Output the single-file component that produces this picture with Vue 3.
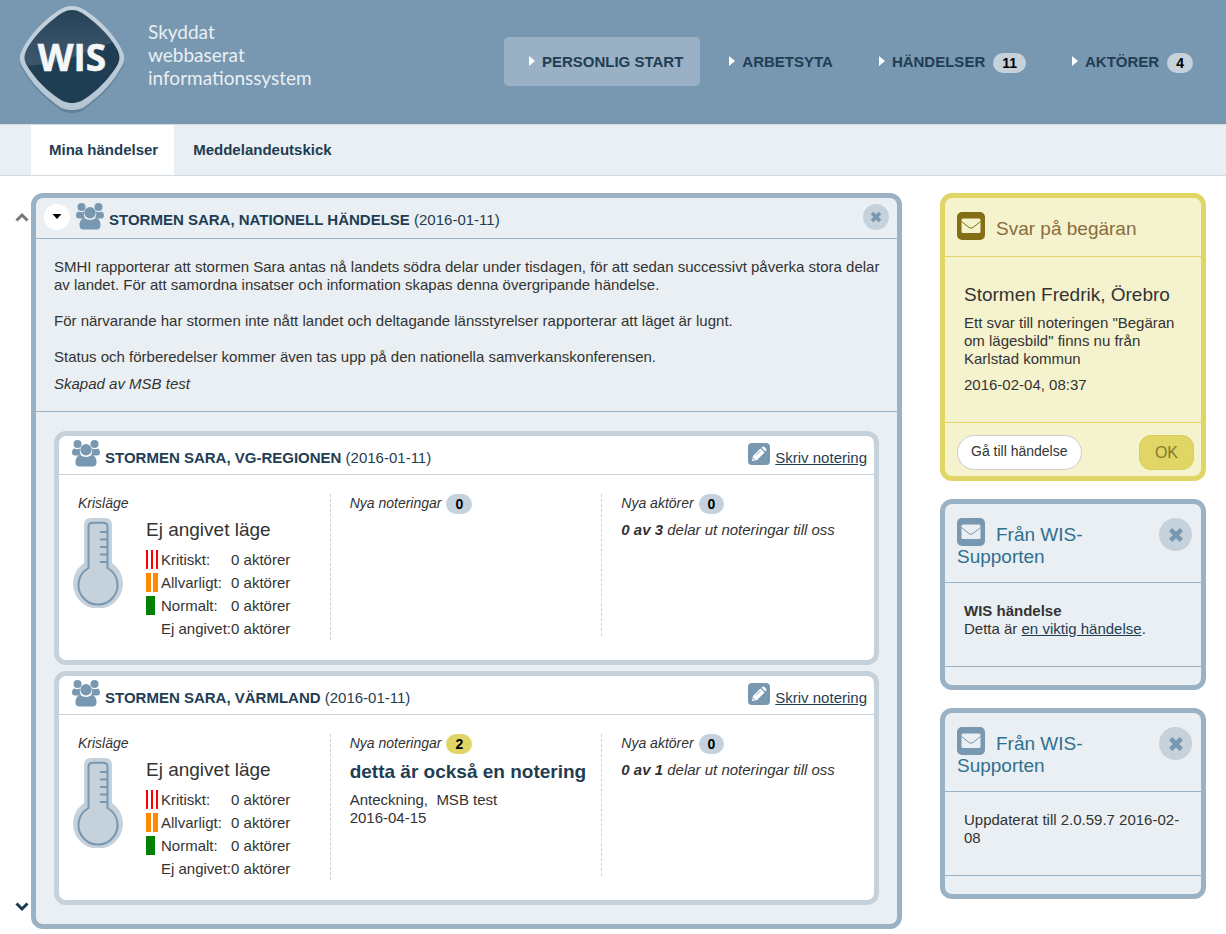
<script setup>
import { ref } from 'vue'

const navItems = [
  { label: 'PERSONLIG START', active: true },
  { label: 'ARBETSYTA' },
  { label: 'HÄNDELSER', count: 11 },
  { label: 'AKTÖRER', count: 4 }
]

const expanded = ref(true)

const events = [
  {
    title: 'STORMEN SARA, VG-REGIONEN',
    date: '(2016-01-11)',
    notes: 0,
    shared: '0 av 3'
  },
  {
    title: 'STORMEN SARA, VÄRMLAND',
    date: '(2016-01-11)',
    notes: 2,
    note: { title: 'detta är också en notering', meta: 'Anteckning,\u00a0 MSB test', date: '2016-04-15' },
    shared: '0 av 1'
  }
]

const levels = [
  { key: 'critical', label: 'Kritiskt:' },
  { key: 'serious', label: 'Allvarligt:' },
  { key: 'normal', label: 'Normalt:' },
  { key: 'unset', label: 'Ej angivet:' }
]
</script>

<template>
  <div class="page">
    <header class="top">
      <a class="brand" href="#">
        <svg class="logo" viewBox="0 0 112 112" role="img" aria-label="WIS">
          <defs>
            <linearGradient id="rim" x1="0" y1="0" x2="0" y2="1">
              <stop offset="0" stop-color="#c3d1dc" />
              <stop offset="1" stop-color="#b4c6d4" />
            </linearGradient>
            <linearGradient id="shine" x1="0" y1="0" x2="0" y2="1">
              <stop offset="0" stop-color="#fff" stop-opacity="0" />
              <stop offset="1" stop-color="#b9b4d0" stop-opacity="0.2" />
            </linearGradient>
            <clipPath id="inside">
              <path d="M56 8C62 8 67 11 73 16C86 26 96 37 102 49C104 54 104 57 102 62C95 74 85 85 73 94C66 99 62 101 56 101C50 101 46 99 39 94C27 85 17 74 10 62C8 57 8 54 10 49C16 37 26 26 39 16C45 11 50 8 56 8Z" />
            </clipPath>
          </defs>
          <path d="M56 6C64 6 69 10 76 15C90 26 100 37 106 49C109 55 109 60 106 66C99 79 89 91 76 101C68 108 64 111 56 111C48 111 44 108 36 101C23 91 13 79 6 66C3 60 3 55 6 49C12 37 22 26 36 15C43 10 48 6 56 6Z" fill="#3f607b" opacity="0.4" />
          <path d="M56 4C64 4 69 8 76 13C90 24 100 36 106 48C109 54 109 58 106 64C99 77 89 89 76 99C68 106 64 108 56 108C48 108 44 106 36 99C23 89 13 77 6 64C3 58 3 54 6 48C12 36 22 24 36 13C43 8 48 4 56 4Z" fill="url(#rim)" />
          <g clip-path="url(#inside)">
            <rect width="112" height="112" fill="#1f3d53" />
            <path d="M0 0H112V38C80 40 60 64 0 64Z" fill="url(#shine)" />
          </g>
          <text x="56" y="69" text-anchor="middle" font-family="'Open Sans', sans-serif" font-weight="700" font-size="37" fill="#f4f6f8" stroke="#f4f6f8" stroke-width="0.600">WIS</text>
        </svg>
        <span class="tagline">Skyddat<br />webbaserat<br />informationssystem</span>
      </a>
      <nav class="nav" aria-label="Huvudmeny">
        <a v-for="item in navItems" :key="item.label" href="#" :class="['nav-item', { active: item.active }]">
          <svg class="caret" viewBox="0 0 6 10" aria-hidden="true"><path d="M0 0L6 5L0 10Z" fill="#fff" /></svg>
          <span>{{ item.label }}</span>
          <span v-if="item.count" class="badge">{{ item.count }}</span>
        </a>
      </nav>
    </header>

    <nav class="tabs" aria-label="Undermeny">
      <a class="tab current" href="#">Mina händelser</a>
      <a class="tab" href="#">Meddelandeutskick</a>
    </nav>

    <div class="content">
      <div class="gutter">
        <button type="button" class="arrow" aria-label="Flytta upp">
          <svg viewBox="0 0 14 10"><path d="M1.500 8.500L7 3L12.500 8.500" fill="none" stroke="#777" stroke-width="3" /></svg>
        </button>
        <button type="button" class="arrow" aria-label="Flytta ned">
          <svg viewBox="0 0 14 10"><path d="M1.500 1.500L7 7L12.500 1.500" fill="none" stroke="#1c3b52" stroke-width="3" /></svg>
        </button>
      </div>

      <main class="panel">
        <div class="panel-head">
          <button type="button" class="toggle" aria-label="Visa eller dölj" @click="expanded = !expanded">
            <svg viewBox="0 0 10 6"><path d="M0.500 0H9.500L5 5Z" fill="#000" /></svg>
          </button>
          <svg class="people" viewBox="0 0 28 27" aria-hidden="true">
            <g fill="#7897b1">
              <circle cx="5.500" cy="4" r="4" /><circle cx="22.500" cy="4" r="4" />
              <path d="M2 8.500C4 9.500 6 9.500 8 8.500Q7 12.500 9 15.500H3Q0 15.500 0 12.500Q0 9.500 2 8.500ZM26 8.500C24 9.500 22 9.500 20 8.500Q21 12.500 19 15.500H25Q28 15.500 28 12.500Q28 9.500 26 8.500Z" />
              <circle cx="14" cy="9.700" r="5.700" />
              <path d="M8 15C12 17.500 16 17.500 20 15Q24.500 16 24.500 22.500Q24.500 26.500 20.500 26.500H7.500Q3.500 26.500 3.500 22.500Q3.500 16 8 15Z" />
            </g>
          </svg>
          <h1 class="title"><b>STORMEN SARA, NATIONELL HÄNDELSE</b> (2016-01-11)</h1>
          <button type="button" class="close" aria-label="Stäng">
            <svg viewBox="0 0 12 12"><path d="M2 2L10 10M10 2L2 10" stroke="#7897b1" stroke-width="3.600" /></svg>
          </button>
        </div>

        <div class="summary">
          <p>SMHI rapporterar att stormen Sara antas nå landets södra delar under tisdagen, för att sedan successivt påverka stora delar av landet. För att samordna insatser och information skapas denna övergripande händelse.</p>
          <p>För närvarande har stormen inte nått landet och deltagande länsstyrelser rapporterar att läget är lugnt.</p>
          <p>Status och förberedelser kommer även tas upp på den nationella samverkanskonferensen.</p>
          <p class="author">Skapad av MSB test</p>
        </div>

        <div v-show="expanded" class="events">
          <article v-for="event in events" :key="event.title" class="event">
            <div class="event-head">
              <svg class="people" viewBox="0 0 28 27" aria-hidden="true">
                <g fill="#7897b1">
                  <circle cx="5.500" cy="4" r="4" /><circle cx="22.500" cy="4" r="4" />
                  <path d="M2 8.500C4 9.500 6 9.500 8 8.500Q7 12.500 9 15.500H3Q0 15.500 0 12.500Q0 9.500 2 8.500ZM26 8.500C24 9.500 22 9.500 20 8.500Q21 12.500 19 15.500H25Q28 15.500 28 12.500Q28 9.500 26 8.500Z" />
                  <circle cx="14" cy="9.700" r="5.700" />
                  <path d="M8 15C12 17.500 16 17.500 20 15Q24.500 16 24.500 22.500Q24.500 26.500 20.500 26.500H7.500Q3.500 26.500 3.500 22.500Q3.500 16 8 15Z" />
                </g>
              </svg>
              <h2 class="title"><b>{{ event.title }}</b> {{ event.date }}</h2>
              <a class="write" href="#">
                <svg class="pencil" viewBox="0 0 22 22" aria-hidden="true">
                  <rect width="22" height="22" rx="4" fill="#7897b1" />
                  <path d="M4 18L5 13L12.500 5.500L16.500 9.500L9 17Z" fill="#fff" />
                  <path d="M13.500 4.500L14.500 3.700Q15.500 3.200 16.300 4L18 5.700Q18.800 6.500 18.200 7.500L17.500 8.500Z" fill="#fff" />
                  <path d="M8 12.500L12.500 8" stroke="#7897b1" stroke-width="0.800" />
                  <circle cx="6" cy="16" r="0.800" fill="#7897b1" />
                </svg>
                <span>Skriv notering</span>
              </a>
            </div>
            <div class="columns">
              <section class="col">
                <h3 class="label">Krisläge</h3>
                <div class="status">
                  <svg class="thermo" viewBox="0 0 50 90" aria-hidden="true">
                    <path d="M11 45V7Q11 0 18 0H32Q39 0 39 7V45A25 25 0 1 1 11 45Z" fill="#c5d1db" />
                    <path d="M15.500 50V9Q15.500 4.700 20 4.700H30Q34.500 4.700 34.500 9V50A19.500 19.500 0 1 1 15.500 50ZM27 14H34M27 21.500H34M27 29H34M27 36.500H34M27 44H34" fill="none" stroke="#7897b1" stroke-width="2" />
                  </svg>
                  <div>
                    <p class="level">Ej angivet läge</p>
                    <table class="levels">
                      <tbody>
                        <tr v-for="level in levels" :key="level.key">
                          <td class="mark"><i :class="['swatch', level.key]"></i></td>
                          <th scope="row">{{ level.label }}</th>
                          <td>0 aktörer</td>
                        </tr>
                      </tbody>
                    </table>
                  </div>
                </div>
              </section>
              <section class="col">
                <h3 class="label">Nya noteringar <span :class="['badge', { fresh: event.notes }]">{{ event.notes }}</span></h3>
                <template v-if="event.note">
                  <h4 class="note-title">{{ event.note.title }}</h4>
                  <p>{{ event.note.meta }}<br />{{ event.note.date }}</p>
                </template>
              </section>
              <section class="col">
                <h3 class="label">Nya aktörer <span class="badge">0</span></h3>
                <p class="shared"><b>{{ event.shared }}</b> delar ut noteringar till oss</p>
              </section>
            </div>
          </article>
        </div>
      </main>

      <aside class="side">
        <section class="card warn">
          <div class="card-head">
            <h2>
              <svg class="mail" viewBox="0 0 28 28" aria-hidden="true">
                <rect width="28" height="28" rx="5" fill="#836d15" />
                <rect x="4.500" y="6.500" width="19" height="14.500" rx="1.500" fill="#f5f2ce" />
                <path d="M4.500 9.500L12 15.500Q14 17 16 15.500L23.500 9.500" fill="none" stroke="#836d15" />
              </svg>Svar på begäran
            </h2>
          </div>
          <div class="card-body reply">
            <h3>Stormen Fredrik, Örebro</h3>
            <p>Ett svar till noteringen "Begäran om lägesbild" finns nu från Karlstad kommun</p>
            <p class="time">2016-02-04, 08:37</p>
          </div>
          <div class="card-foot">
            <button type="button" class="btn">Gå till händelse</button>
            <button type="button" class="btn ok">OK</button>
          </div>
        </section>

        <section v-for="n in 2" :key="n" class="card">
          <div class="card-head">
            <h2>
              <svg class="mail" viewBox="0 0 28 28" aria-hidden="true">
                <rect width="28" height="28" rx="5" fill="#7897b1" />
                <rect x="4.500" y="6.500" width="19" height="14.500" rx="1.500" fill="#e9eff2" />
                <path d="M4.500 9.500L12 15.500Q14 17 16 15.500L23.500 9.500" fill="none" stroke="#7897b1" />
              </svg>Från WIS-Supporten
            </h2>
            <button type="button" class="close large" aria-label="Stäng">
              <svg viewBox="0 0 12 12"><path d="M2 2L10 10M10 2L2 10" stroke="#7897b1" stroke-width="3.300" /></svg>
            </button>
          </div>
          <div class="card-body">
            <p v-if="n === 1"><b>WIS händelse</b><br />Detta är <a href="#">en viktig händelse</a>.</p>
            <p v-else>Uppdaterat till 2.0.59.7 2016-02-08</p>
          </div>
          <div class="card-foot"></div>
        </section>
      </aside>
    </div>
  </div>
</template>

<style>
body {
  margin: 0;
  background: #fff;
}
</style>

<style scoped>
.page {
  font: 15px/18px "Liberation Sans", Arial, sans-serif;
  color: #333;
}
.page * {
  box-sizing: border-box;
}
h1, h2, h3, h4, p {
  margin: 0;
  font-size: inherit;
  font-weight: 400;
}
a {
  color: #1f3d53;
}
button {
  padding: 0;
  border: 0;
  background: none;
  font: inherit;
  color: inherit;
  cursor: pointer;
}
svg {
  flex: none;
}

.top {
  display: flex;
  align-items: center;
  min-height: 124px;
  padding: 0 16px;
  background: #7897b1;
}
.brand {
  display: flex;
  align-items: center;
  gap: 20px;
  text-decoration: none;
}
.logo {
  width: 112px;
  height: 112px;
  margin-bottom: 8px;
}
.tagline {
  margin-bottom: 16px;
  font: 19px/23px Lato, sans-serif;
  color: #e9eff2;
}
.nav {
  display: flex;
  gap: 4px;
  margin: 0 0 2px auto;
}
.nav-item {
  display: flex;
  align-items: center;
  height: 49px;
  padding: 2px 17px 0 25px;
  border-radius: 5px;
  font-weight: 700;
  text-decoration: none;
}
.nav-item.active {
  background: #9ab1c5;
}
.caret {
  width: 6px;
  height: 10px;
  margin: 0 7px 2px 0;
}
.nav-item .badge {
  margin: 2px 0 0 8px;
}
.badge {
  display: inline-block;
  height: 20px;
  padding: 0 9px;
  border-radius: 10px;
  background: #c5d1db;
  font-size: 14px;
  font-style: normal;
  font-weight: 700;
  line-height: 21px;
  color: #000;
}
.badge.fresh {
  background: #e0d565;
}

.tabs {
  display: flex;
  gap: 1px;
  padding-left: 31px;
  border-top: 1px solid #d0dbe3;
  border-bottom: 1px solid #d0dbe3;
  background: #e9eff2;
}
.tab {
  padding: 16px 16px 16px 18px;
  font-weight: 700;
  text-decoration: none;
}
.tab.current {
  background: #fff;
}

.content {
  display: flex;
  align-items: flex-start;
  padding: 17px 20px 5px 0;
}
.gutter {
  display: flex;
  flex: none;
  flex-direction: column;
  align-self: stretch;
  justify-content: space-between;
  width: 31px;
  padding: 19px 0 17px 15px;
}
.arrow, .arrow svg {
  display: block;
  width: 14px;
  height: 10px;
}

.panel {
  flex: 1;
  min-width: 0;
  border: 5px solid #9bb1c4;
  border-radius: 12px;
  background: #e9eff2;
}
.panel-head {
  display: flex;
  align-items: center;
  min-height: 41px;
  padding: 0 8px;
  border-bottom: 1px solid #9bb1c4;
}
.toggle {
  display: flex;
  align-items: center;
  justify-content: center;
  width: 26px;
  height: 26px;
  margin: 0 6px 2px 0;
  border-radius: 50%;
  background: #fff;
}
.toggle svg {
  width: 10px;
  height: 6px;
}
.people {
  width: 28px;
  height: 27px;
  margin: 0 5px 4px 0;
}
.title {
  margin-top: 4px;
  color: #1f3d53;
}
.event .title {
  margin-top: 6px;
}
.close {
  display: flex;
  flex: none;
  align-items: center;
  justify-content: center;
  width: 26px;
  height: 26px;
  margin: 0 0 2px auto;
  border-radius: 50%;
  background: #c5d1db;
}
.close svg {
  width: 12px;
  height: 12px;
}
.close.large {
  width: 33px;
  height: 33px;
}
.close.large svg {
  width: 16px;
  height: 16px;
}
.summary {
  padding: 19px 8px 18px 18px;
  border-bottom: 1px solid #9bb1c4;
}
.summary p + p {
  margin-top: 18px;
}
.summary p.author {
  margin-top: 9px;
  font-style: italic;
}
.events {
  display: grid;
  gap: 6px;
  padding: 19px 18px;
}
.event {
  border: 5px solid #c5d1db;
  border-radius: 12px;
  background: #fff;
}
.event-head {
  display: flex;
  align-items: center;
  min-height: 39px;
  padding: 0 7px 0 13px;
  border-bottom: 1px solid #c5d1db;
}
.write {
  display: flex;
  align-items: center;
  gap: 5px;
  margin-left: auto;
}
.write span {
  margin-top: 6px;
}
.pencil {
  width: 22px;
  height: 22px;
  margin-bottom: 2px;
}
.columns {
  display: grid;
  grid-template-columns: repeat(3, 1fr);
  padding: 19px 0 20px;
}
.col {
  padding-left: 19px;
}
.col:not(:last-child) {
  border-right: 1px dashed #c5d1db;
}
.col:nth-child(2) {
  margin-bottom: 4px;
}
.label {
  height: 18px;
  font-size: 14px;
  font-style: italic;
}
.label .badge {
  margin-left: 1px;
  vertical-align: top;
}
.status {
  display: flex;
  gap: 23px;
  margin: 6px 0 0 -5px;
}
.thermo {
  width: 50px;
  height: 90px;
}
.level {
  padding-top: 1px;
  font-size: 19px;
  line-height: 22px;
}
.levels {
  margin-top: 7px;
  border-spacing: 0;
}
.levels td, .levels th {
  height: 23px;
  padding: 0;
  font-weight: 400;
  text-align: left;
  white-space: nowrap;
}
.levels th {
  width: 68px;
}
.levels .mark {
  width: 15px;
}
.swatch {
  display: block;
  width: 12px;
  height: 19px;
}
.critical {
  background: repeating-linear-gradient(90deg, #f00 0 2px, transparent 2px 5px);
}
.serious {
  background: repeating-linear-gradient(90deg, #ff8c00 0 5px, transparent 5px 7px);
}
.normal {
  width: 9px;
  background: #008000;
}
.note-title {
  margin: 9px 0 8px;
  font-size: 19px;
  font-weight: 700;
  line-height: 22px;
  color: #1f3d53;
}
.shared {
  margin-top: 9px;
  font-style: italic;
}

.side {
  display: grid;
  flex: none;
  gap: 18px;
  width: 266px;
  margin-left: 38px;
}
.card {
  border: 5px solid #9bb1c4;
  border-radius: 12px;
  background: #e9eff2;
}
.card-head {
  display: flex;
  justify-content: space-between;
  min-height: 59px;
  padding: 14px 9px 14px 12px;
  border-bottom: 1px solid #9bb1c4;
}
.card-head h2 {
  font-size: 19px;
  line-height: 22px;
  color: #31708f;
}
.mail {
  width: 28px;
  height: 28px;
  margin-right: 11px;
  vertical-align: -5px;
}
.card-body {
  min-height: 83px;
  padding: 19px 19px 28px;
}
.card-body.reply {
  padding-top: 27px;
}
.card-body h3 {
  margin-bottom: 8px;
  font-size: 19px;
  line-height: 22px;
}
.time {
  margin-top: 8px;
}
.card-foot {
  display: flex;
  justify-content: space-between;
  padding: 12px 7px 6px 12px;
  border-top: 1px solid #9bb1c4;
}
.btn {
  height: 35px;
  padding: 0 13px 3px;
  border: 1px solid #ccc;
  border-radius: 18px;
  background: #fff;
  font-size: 14px;
}
.btn.ok {
  padding: 0 15px;
  border-color: #d9cd55;
  border-radius: 12px;
  background: #e0d565;
  font-size: 16px;
  color: #7f7a2c;
}
.card.warn {
  border-color: #e0d565;
  background: #f5f2ce;
}
.warn .card-head, .warn .card-foot {
  border-color: #e0d565;
}
.warn .card-head h2 {
  color: #8a6d3b;
}
</style>
